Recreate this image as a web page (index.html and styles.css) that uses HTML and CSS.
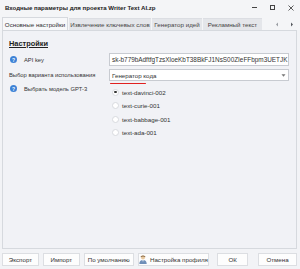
FILE: index.html
```html
<!DOCTYPE html>
<html lang="ru">
<head>
    <meta charset="UTF-8">
    <title>Входные параметры для проекта Writer Text AI.zp</title>
    <link rel="stylesheet" href="styles.css">
</head>
<body>
    <div class="window">
        <div class="titlebar">
            <span class="title">Входные параметры для проекта Writer Text AI.zp</span>
            <div class="win-controls">
                <span class="ctl-min"></span>
                <span class="ctl-max"></span>
                <svg class="ctl-close" width="6" height="6" viewBox="0 0 6 6"><path d="M0.5 0.5L5.5 5.5M5.5 0.5L0.5 5.5" stroke="#333" stroke-width="0.8"/></svg>
            </div>
        </div>

        <div class="tabs">
            <div class="tab active">Основные настройки</div>
            <div class="tab">Извлечение ключевых слов</div>
            <div class="tab">Генератор идей</div>
            <div class="tab">Рекламный текст</div>
            <div class="tab-arrows">
                <svg width="4" height="5" viewBox="0 0 4 5"><path d="M3 0.5L1 2.5L3 4.5Z" fill="#9a9da3"/></svg>
                <svg width="4" height="5" viewBox="0 0 4 5"><path d="M1 0.5L3 2.5L1 4.5Z" fill="#55585e"/></svg>
            </div>
        </div>

        <div class="panel">
            <div class="section-title">Настройки</div>

            <div class="form-grid">
                <div class="label"><span class="help-icon">?</span>API key</div>
                <div class="input">sk-b779bAdftfgTzsXloeKbT38BkFJ1NsS00ZIeFFbpm3UETJK</div>

                <div class="label">Выбор варианта использования</div>
                <div class="select-wrap">
                    <div class="select">
                        <span class="select-value">Генератор кода</span>
                        <span class="select-arrow"><svg width="5" height="3" viewBox="0 0 5 3"><path d="M0.5 0.3L2.5 2.7L4.5 0.3Z" fill="#777"/></svg></span>
                    </div>
                    <div class="red-mark"></div>
                </div>

                <div class="label label-top"><span class="help-icon">?</span>Выбрать модель GPT-3</div>
                <div class="radios">
                    <div class="radio-row"><span class="radio checked"></span>text-davinci-002</div>
                    <div class="radio-row"><span class="radio"></span>text-curie-001</div>
                    <div class="radio-row"><span class="radio"></span>text-babbage-001</div>
                    <div class="radio-row"><span class="radio"></span>text-ada-001</div>
                </div>
            </div>
        </div>

        <div class="footer">
            <div class="btn btn-export">Экспорт</div>
            <div class="btn btn-import">Импорт</div>
            <div class="btn btn-default">По умолчанию</div>
            <div class="btn btn-profile">
                <svg width="8" height="9" viewBox="0 0 8 9">
                    <circle cx="4" cy="2.4" r="2" fill="#e8c9a0"/>
                    <path d="M1.6 1.6Q4 -0.6 6.4 1.6L6.2 2.2Q4 1 1.8 2.2Z" fill="#8a6a45"/>
                    <path d="M0.3 9Q0.3 5 4 5Q7.7 5 7.7 9Z" fill="#6f8fb8"/>
                    <path d="M3.4 5.1L4 7L4.6 5.1Z" fill="#fff"/>
                </svg>
                Настройка профиля
            </div>
            <div class="btn btn-ok">ОК</div>
            <div class="btn btn-cancel">Отмена</div>
        </div>
    </div>
</body>
</html>
```

FILE: styles.css
```css
* {
    margin: 0;
    padding: 0;
    box-sizing: border-box;
}

body {
    font-family: "Liberation Sans", Arial, sans-serif;
    font-size: 6.2px;
    color: #333;
    background-color: #eef0f4;
}

.window {
    width: 300px;
    height: 269px;
    display: flex;
    flex-direction: column;
    background-color: #f2f3f6;
}

.titlebar {
    height: 15px;
    display: flex;
    align-items: center;
    padding-left: 5px;
    background-color: #f4f5f7;
}

.title {
    font-weight: bold;
    font-size: 6.1px;
    color: #222;
    white-space: nowrap;
}

.win-controls {
    margin-left: auto;
    display: flex;
    align-items: center;
    gap: 13px;
    padding-right: 6px;
}

.ctl-min {
    width: 5px;
    height: 1px;
    background-color: #444;
}

.ctl-max {
    width: 5px;
    height: 5px;
    border: 0.8px solid #444;
}

.tabs {
    height: 15px;
    display: flex;
    align-items: flex-end;
    padding-left: 2px;
    background-color: #f4f5f7;
}

.tab {
    height: 12px;
    display: flex;
    align-items: center;
    padding: 0 4px;
    margin-right: 1px;
    background-color: #e4e6ea;
    color: #444;
    border-top: 1px solid #dcdee3;
    white-space: nowrap;
}

.tab.active {
    width: 66px;
    justify-content: center;
    background-color: #f7f8fa;
    border: 1px solid #d6d9de;
    border-bottom: none;
    color: #333;
    height: 13px;
}

.tab:nth-child(2) { width: 82px; justify-content: center; }
.tab:nth-child(3) { width: 50px; justify-content: center; }
.tab:nth-child(4) { width: 59px; justify-content: center; }

.tab-arrows {
    margin-left: auto;
    height: 12px;
    width: 37px;
    display: flex;
    align-items: center;
    justify-content: space-around;
    padding-left: 6px;
}

.panel {
    margin: 0 3px 0 2px;
    height: 219px;
    border: 1px solid #d6d9de;
    background-color: #f1f2f6;
    padding: 8px 8px 0 6px;
}

.section-title {
    font-weight: bold;
    font-size: 7.4px;
    text-decoration: underline;
    color: #222;
    margin-bottom: 5px;
}

.form-grid {
    display: grid;
    grid-template-columns: 100px 180px;
    row-gap: 3px;
    align-items: center;
}

.label {
    display: flex;
    align-items: center;
    color: #333;
    font-size: 5.8px;
    white-space: nowrap;
}

.label-top {
    align-self: start;
    padding-top: 1px;
}

.help-icon {
    width: 7px;
    height: 7px;
    border-radius: 50%;
    background-color: #3d82d6;
    color: #fff;
    font-size: 5px;
    font-weight: bold;
    display: flex;
    align-items: center;
    justify-content: center;
    margin: 0 7px 0 1px;
}

.input {
    height: 13px;
    background-color: #fff;
    border: 1px solid #c8cbd1;
    display: flex;
    align-items: center;
    padding-left: 2px;
    font-size: 6.4px;
    white-space: nowrap;
    overflow: hidden;
}

.select-wrap {
    position: relative;
}

.select {
    height: 12px;
    background-color: #fff;
    border: 1px solid #c8cbd1;
    display: flex;
    align-items: center;
}

.select-value {
    flex: 1;
    padding-left: 2px;
}

.select-arrow {
    width: 10px;
    height: 10px;
    display: flex;
    align-items: center;
    justify-content: center;
}

.red-mark {
    position: absolute;
    left: 1px;
    top: 14px;
    width: 36px;
    height: 1px;
    background-color: #e02020;
    border-radius: 1px;
}

.radios {
    display: flex;
    flex-direction: column;
    gap: 5.5px;
    padding: 4px 0 0 3px;
}

.radio-row {
    display: flex;
    align-items: center;
    height: 8px;
}

.radio {
    width: 7px;
    height: 7px;
    border-radius: 50%;
    background-color: #fff;
    border: 0.6px solid #d8dade;
    margin-right: 3px;
    display: flex;
    align-items: center;
    justify-content: center;
}

.radio.checked::after {
    content: "";
    width: 2.5px;
    height: 2.5px;
    border-radius: 50%;
    background-color: #333;
}

.footer {
    display: flex;
    align-items: center;
    padding: 4px 3px 0 2px;
    gap: 4px;
}

.btn {
    height: 13px;
    background-color: #fdfdfd;
    border: 1px solid #dcdee2;
    display: flex;
    align-items: center;
    justify-content: center;
    gap: 3px;
    color: #333;
    white-space: nowrap;
}

.btn-export { width: 37px; }
.btn-import { width: 37px; }
.btn-default { width: 50px; }
.btn-profile { width: 72px; }
.btn-ok { width: 31px; margin-left: 4px; }
.btn-cancel { width: 39px; margin-left: 6px; }
```
